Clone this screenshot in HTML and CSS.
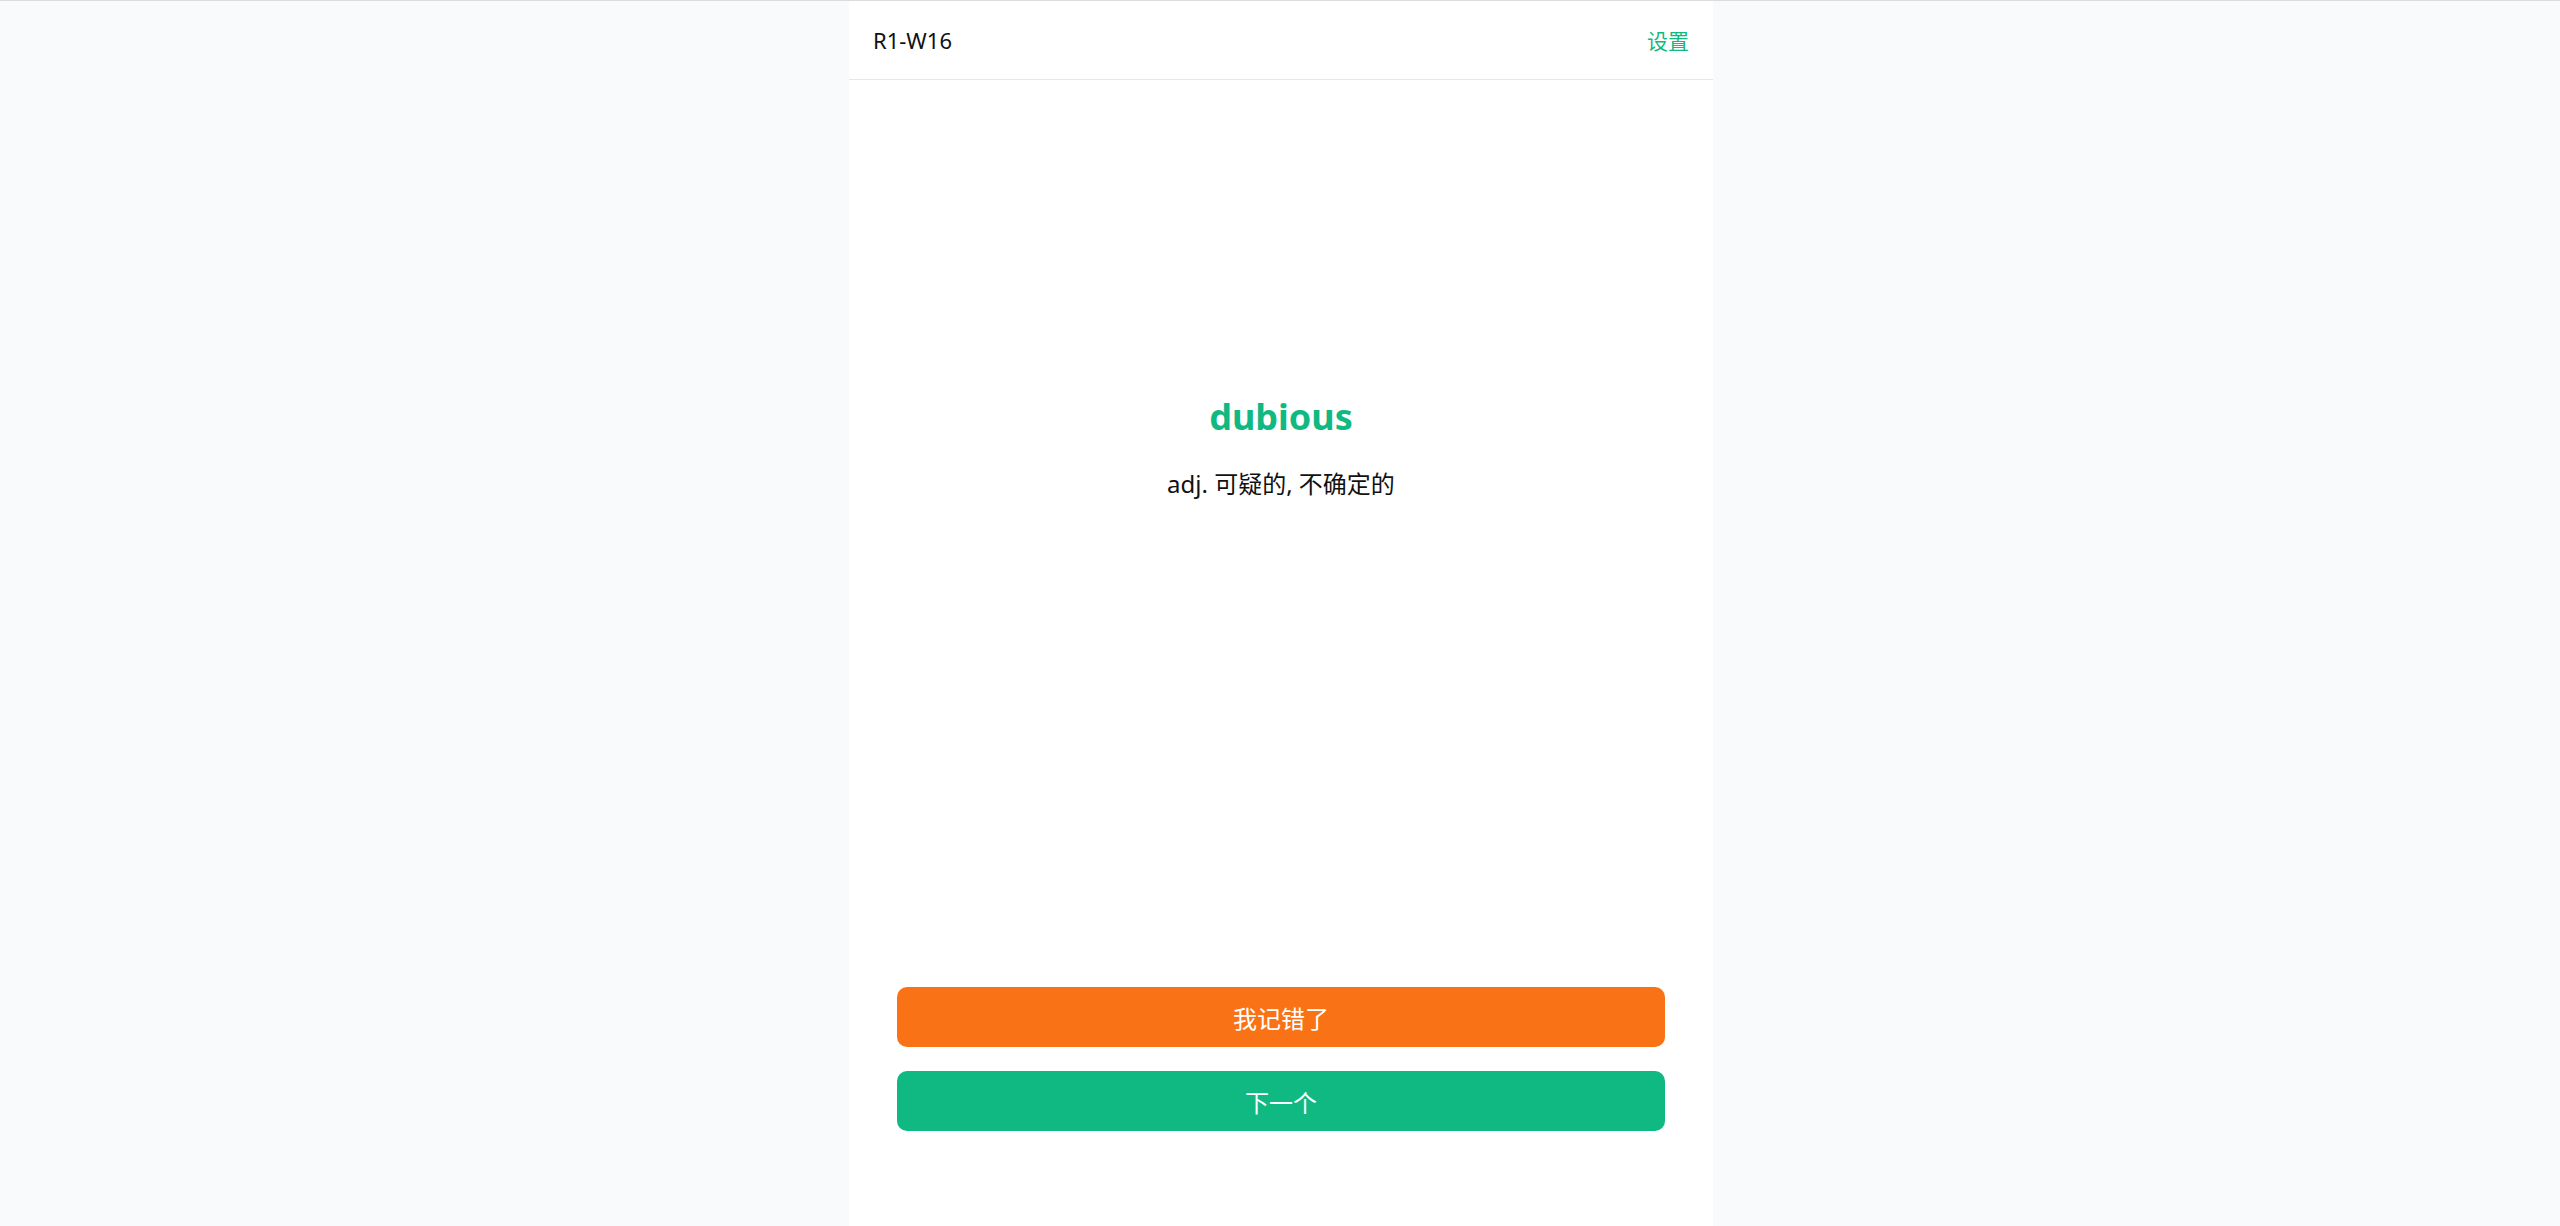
FILE: index.html
```html
<!DOCTYPE html>
<html lang="zh-CN">
<head>
<meta charset="utf-8">
<title>R1-W16</title>
<link rel="stylesheet" href="styles.css">
</head>
<body>
<div class="card">
  <header class="topbar">
    <span class="round">R1-W16</span>
    <a class="settings">设置</a>
  </header>
  <main class="content">
    <div class="word">dubious</div>
    <div class="meaning">adj. 可疑的, 不确定的</div>
  </main>
  <div class="actions">
    <button class="btn btn-wrong">我记错了</button>
    <button class="btn btn-next">下一个</button>
  </div>
</div>
</body>
</html>
```
FILE: styles.css
```css
html, body {
  margin: 0;
  padding: 0;
}
body {
  background: #f9fafb;
  border-top: 1px solid #dcdcdc;
  padding-left: 2px;
  font-family: "Noto Sans", "Noto Sans CJK SC", sans-serif;
  color: #111;
  height: 1225px;
  overflow: hidden;
}
.card {
  width: 864px;
  margin: 0 auto;
  height: 1225px;
  background: #fff;
  display: flex;
  flex-direction: column;
  box-sizing: border-box;
}
.topbar {
  height: 78px;
  border-bottom: 1px solid #e5e7eb;
  display: flex;
  align-items: center;
  justify-content: space-between;
  padding: 0 24px;
  font-size: 22px;
  flex-shrink: 0;
}
.round {
  color: #111;
}
.settings {
  color: #10b981;
  cursor: pointer;
  font-size: 21px;
  font-family: "Noto Sans CJK SC", sans-serif;
}
.content {
  flex: 1;
  display: flex;
  flex-direction: column;
  align-items: center;
  padding-top: 310px;
  box-sizing: border-box;
}
.word {
  color: #10b981;
  font-size: 36px;
  font-weight: 700;
  line-height: 54px;
}
.meaning {
  margin-top: 22px;
  font-size: 24px;
  line-height: 36px;
  color: #111;
}
.actions {
  display: flex;
  flex-direction: column;
  gap: 24px;
  padding: 0 48px 95px;
  flex-shrink: 0;
}
.btn {
  height: 60px;
  border: none;
  border-radius: 10px;
  color: #fff;
  font-size: 24px;
  font-family: "Noto Sans CJK SC", sans-serif;
  cursor: pointer;
}
.btn-wrong {
  background: #f97316;
}
.btn-next {
  background: #10b981;
}
```
